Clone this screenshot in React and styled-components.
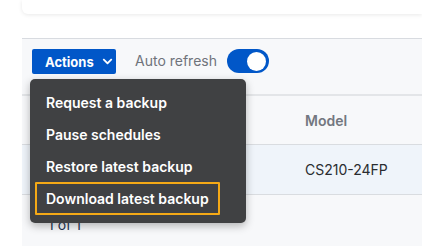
import styled, { createGlobalStyle } from "styled-components";
import { FaChevronDown } from "react-icons/fa";

const GlobalStyle = createGlobalStyle`
  html, body {
    margin: 0;
    padding: 0;
    background: #ffffff;
    font-family: Inter, "Noto Sans", sans-serif;
    overflow: hidden;
  }
`;

const Page = styled.div`
  width: 422px;
  height: 246px;
  padding-left: 22px;
  box-sizing: border-box;
  display: flex;
  flex-direction: column;
`;

const TopCard = styled.div`
  height: 14px;
  background: #ffffff;
  border-radius: 0 0 0 6px;
  box-shadow: 0 1px 4px rgba(0, 0, 0, 0.09);
  margin-bottom: 24px;
`;

const Panel = styled.div`
  position: relative;
  flex: 1;
  background: #f7f8fa;
  border-top: 1px solid #d8dbe0;
  display: flex;
  flex-direction: column;
`;

const Toolbar = styled.div`
  display: flex;
  align-items: flex-start;
  height: 55px;
  padding: 10px 10px 0;
  box-sizing: border-box;
`;

const ActionsButton = styled.button`
  display: flex;
  align-items: center;
  gap: 8px;
  height: 25px;
  width: 84px;
  padding: 0 0 0 13px;
  border: none;
  border-radius: 2px;
  background: #0157c8;
  color: #ffffff;
  font-family: Inter, sans-serif;
  font-size: 13px;
  font-weight: 700;
  cursor: pointer;
`;

const AutoLabel = styled.span`
  margin-left: 19px;
  font-size: 14px;
  color: #6f737a;
  line-height: 24px;
`;

const Toggle = styled.div`
  margin-left: 10px;
  width: 42px;
  height: 24px;
  border-radius: 12px;
  background: #0157c8;
  display: flex;
  align-items: center;
  justify-content: flex-end;
  padding-right: 3px;
  box-sizing: border-box;
`;

const Knob = styled.span`
  width: 19px;
  height: 19px;
  border-radius: 50%;
  background: #ffffff;
`;

const Table = styled.div`
  border-top: 2px solid #e3e5e8;
`;

const Row = styled.div`
  display: grid;
  grid-template-columns: 283px 1fr;
  align-items: center;
  height: ${(p) => (p.$head ? 48 : 49)}px;
  border-bottom: 1px solid #d9dce0;
  background: ${(p) => (p.$selected ? "#eff4fa" : "transparent")};
`;

const Cell = styled.div`
  font-size: 14px;
  font-weight: ${(p) => (p.$head ? 600 : 400)};
  color: ${(p) => (p.$head ? "#737780" : "#2a2c30")};
`;

const Footer = styled.div`
  padding: 21px 0 0 26px;
  font-size: 14px;
  color: #253452;
`;

const Menu = styled.div`
  position: absolute;
  left: 8px;
  top: 40px;
  width: 216px;
  height: 144px;
  padding: 7px 0 0;
  box-sizing: border-box;
  background: #404143;
  border-radius: 5px;
  box-shadow: 0 3px 8px rgba(0, 0, 0, 0.28);
  display: flex;
  flex-direction: column;
  align-items: flex-start;
`;

const MenuItem = styled.div`
  margin: 0 5px;
  padding: 0 9px;
  display: flex;
  align-items: center;
  font-size: 14px;
  font-weight: 600;
  color: #ffffff;
  white-space: nowrap;
  border: 2px solid ${(p) => (p.$focused ? "#f5a916" : "transparent")};
  border-radius: 1px;
  box-sizing: border-box;
  height: ${(p) => (p.$focused ? 33 : 32)}px;
`;

const items = [
  "Request a backup",
  "Pause schedules",
  "Restore latest backup",
  "Download latest backup",
];

export default function App() {
  return (
    <>
      <GlobalStyle />
      <Page>
        <TopCard />
        <Panel>
          <Toolbar>
            <ActionsButton>
              Actions <FaChevronDown size={11} />
            </ActionsButton>
            <AutoLabel>Auto refresh</AutoLabel>
            <Toggle>
              <Knob />
            </Toggle>
          </Toolbar>
          <Table>
            <Row $head>
              <Cell />
              <Cell $head>Model</Cell>
            </Row>
            <Row $selected>
              <Cell />
              <Cell>CS210-24FP</Cell>
            </Row>
          </Table>
          <Footer>1 of 1</Footer>
          <Menu>
            {items.map((item, i) => (
              <MenuItem key={item} $focused={i === items.length - 1}>
                {item}
              </MenuItem>
            ))}
          </Menu>
        </Panel>
      </Page>
    </>
  );
}
